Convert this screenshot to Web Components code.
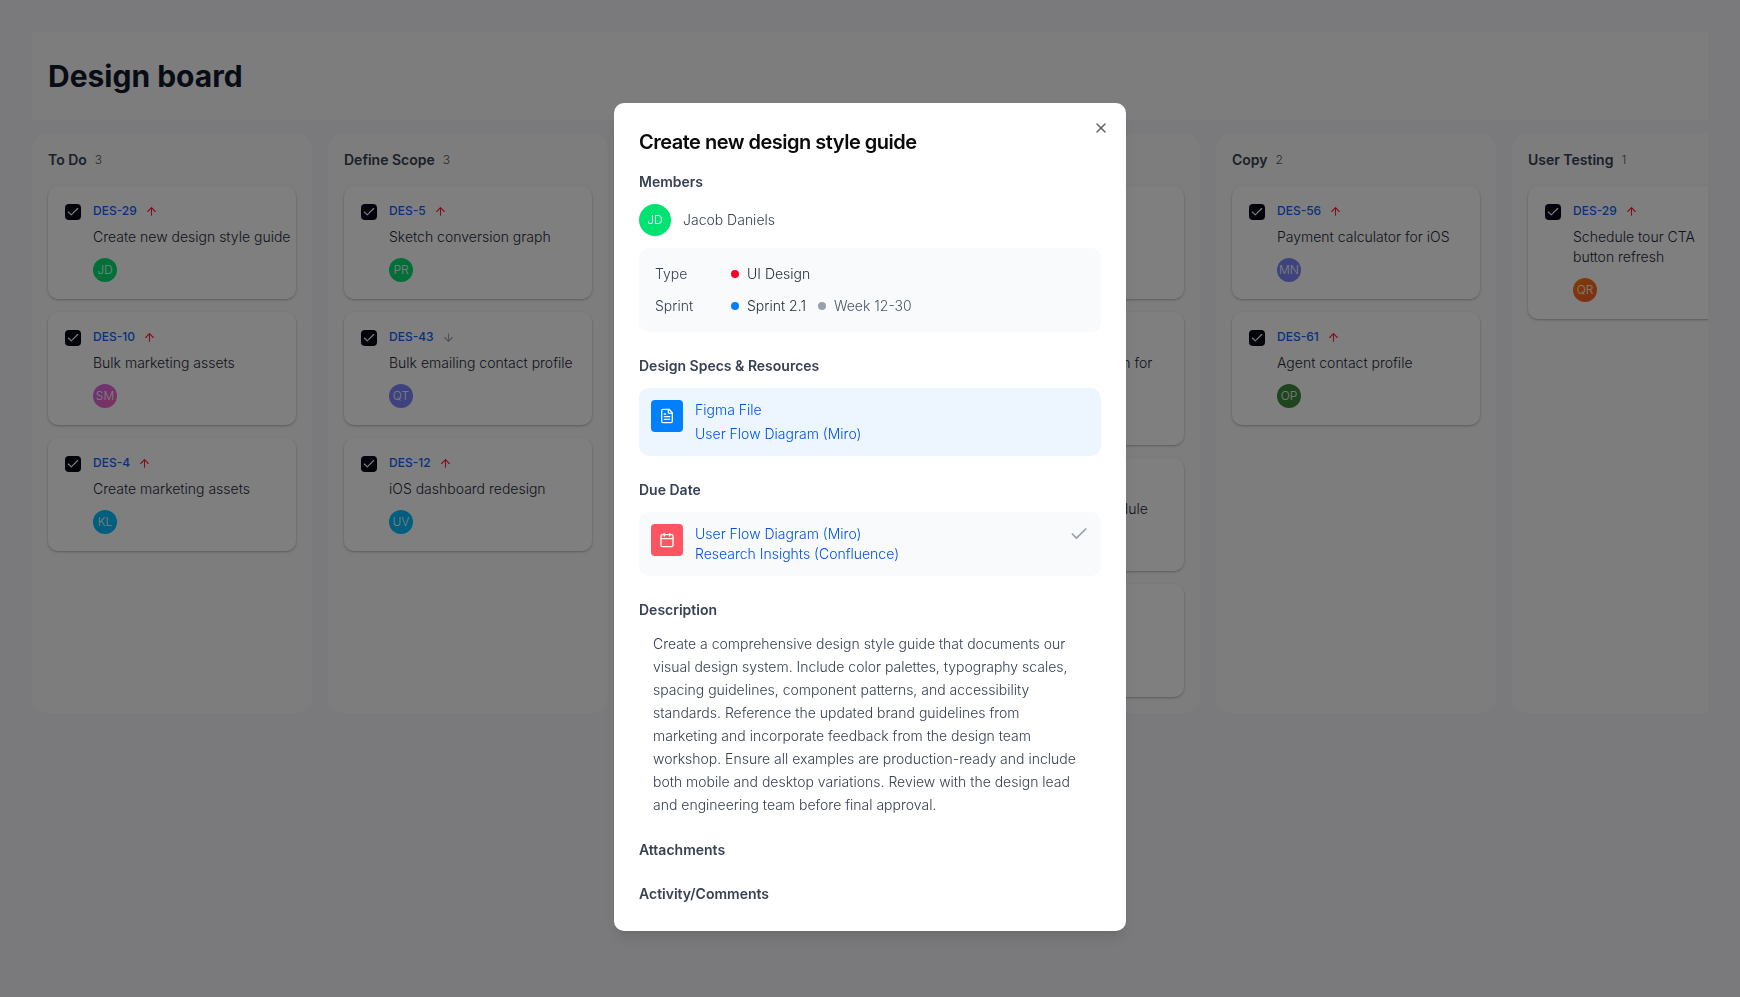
<!DOCTYPE html>
<html lang="en">
<head>
<meta charset="utf-8">
<title>Design board</title>
<style>
  body {
    margin: 0;
    min-height: 100vh;
    background: #f5f5f8;
    color: #1e2939;
    font-family: Inter, "Liberation Sans", sans-serif;
    font-size: 14px;
    font-weight: 300;
    line-height: 20px;
    font-variation-settings: "opsz" 14;
  }
</style>
</head>
<body>
<board-page heading="Design board">
  <board-column heading="To Do" count="3">
    <task-card key="DES-29" initials="JD" color="#05df72">Create new design style guide</task-card>
    <task-card key="DES-10" initials="SM" color="linear-gradient(135deg, #d868f0, #fb64b6)">Bulk marketing assets</task-card>
    <task-card key="DES-4" initials="KL" color="#00bcff">Create marketing assets</task-card>
  </board-column>
  <board-column heading="Define Scope" count="3">
    <task-card key="DES-5" initials="PR" color="#05df72">Sketch conversion graph</task-card>
    <task-card key="DES-43" initials="QT" color="#7c86ff" priority="low">Bulk emailing contact profile</task-card>
    <task-card key="DES-12" initials="UV" color="#00bcff">iOS dashboard redesign</task-card>
  </board-column>
  <board-column heading="Design" count="0"></board-column>
  <board-column heading="Review" count="4">
    <task-card key="DES-40" initials="EF" color="#00bcff">Search filters</task-card>
    <task-card key="DES-41" initials="GH" color="#05df72">Landing page redesign for<br>agents</task-card>
    <task-card key="DES-44" initials="IJ" color="#7c86ff">Book home tour schedule</task-card>
    <task-card key="DES-47" initials="WX" color="#00bcff">Saved homes</task-card>
  </board-column>
  <board-column heading="Copy" count="2">
    <task-card key="DES-56" initials="MN" color="#7c86ff">Payment calculator for iOS</task-card>
    <task-card key="DES-61" initials="OP" color="#3f8a3f">Agent contact profile</task-card>
  </board-column>
  <board-column heading="User Testing" count="1">
    <task-card key="DES-29" initials="QR" color="linear-gradient(135deg, #ff7a00, #ff5a36)">Schedule tour CTA<br>button refresh</task-card>
  </board-column>
</board-page>

<task-dialog heading="Create new design style guide">
  <dialog-section heading="Members">
    <member-row initials="JD">Jacob Daniels</member-row>
    <task-facts></task-facts>
  </dialog-section>
  <dialog-section heading="Design Specs &amp; Resources">
    <link-panel icon="file" tone="blue">
      <a href="#figma">Figma File</a>
      <a href="#flow">User Flow Diagram (Miro)</a>
    </link-panel>
  </dialog-section>
  <dialog-section heading="Due Date">
    <link-panel icon="calendar" tone="red" done>
      <a href="#due-flow">User Flow Diagram (Miro)</a>
      <a href="#insights">Research Insights (Confluence)</a>
    </link-panel>
  </dialog-section>
  <dialog-section heading="Description">
    <task-description>Create a comprehensive design style guide that documents our visual design system. Include color palettes, typography scales, spacing guidelines, component patterns, and accessibility standards. Reference the updated brand guidelines from marketing and incorporate feedback from the design team workshop. Ensure all examples are production-ready and include both mobile and desktop variations. Review with the design lead and engineering team before final approval.</task-description>
  </dialog-section>
  <dialog-section heading="Attachments"></dialog-section>
  <dialog-section heading="Activity/Comments"></dialog-section>
</task-dialog>

<script>
const ICONS = {
  up: '<path d="m5 12 7-7 7 7"/><path d="M12 19V5"/>',
  down: '<path d="M12 5v14"/><path d="m19 12-7 7-7-7"/>',
  check: '<path d="M20 6 9 17l-5-5"/>',
  close: '<path d="M18 6 6 18"/><path d="m6 6 12 12"/>',
  file: '<path d="M15 2H6a2 2 0 0 0-2 2v16a2 2 0 0 0 2 2h12a2 2 0 0 0 2-2V7Z"/><path d="M14 2v4a2 2 0 0 0 2 2h4"/><path d="M10 9H8"/><path d="M16 13H8"/><path d="M16 17H8"/>',
  calendar: '<path d="M8 2v4"/><path d="M16 2v4"/><rect width="18" height="18" x="3" y="4" rx="2"/><path d="M3 10h18"/>'
};

function icon(name, size, width = 2) {
  return `<svg width="${size}" height="${size}" viewBox="0 0 24 24" fill="none" stroke="currentColor" stroke-width="${width}" stroke-linecap="round" stroke-linejoin="round" aria-hidden="true">${ICONS[name]}</svg>`;
}

class BoardPage extends HTMLElement {
  connectedCallback() {
    this.attachShadow({ mode: 'open' });
    this.shadowRoot.innerHTML = `
      <style>
        :host {
          display: block;
          padding: 32px;
        }
        header {
          padding: 24px 16px;
          background: #fafafc;
        }
        h1 {
          margin: 0;
          font-size: 30px;
          line-height: 40px;
          font-weight: 700;
          color: #101828;
        }
        .columns {
          display: flex;
          gap: 16px;
          margin-top: 14px;
          overflow: hidden;
        }
      </style>
      <header><h1>${this.getAttribute('heading')}</h1></header>
      <div class="columns"><slot></slot></div>
    `;
  }
}
customElements.define('board-page', BoardPage);

class BoardColumn extends HTMLElement {
  connectedCallback() {
    this.attachShadow({ mode: 'open' });
    this.shadowRoot.innerHTML = `
      <style>
        :host {
          display: block;
          flex: 0 0 280px;
          box-sizing: border-box;
          padding: 16px;
          border-radius: 16px;
          background: #fafafc;
        }
        .head {
          display: flex;
          align-items: center;
          gap: 8px;
          margin-bottom: 16px;
        }
        h2 {
          margin: 0;
          font-size: 14px;
          font-weight: 600;
          color: #364153;
        }
        .count {
          font-size: 12px;
          color: #4a5565;
        }
        .cards {
          display: flex;
          flex-direction: column;
          gap: 13px;
        }
      </style>
      <div class="head">
        <h2>${this.getAttribute('heading')}</h2>
        <span class="count">${this.getAttribute('count')}</span>
      </div>
      <div class="cards"><slot></slot></div>
    `;
  }
}
customElements.define('board-column', BoardColumn);

class TaskCard extends HTMLElement {
  connectedCallback() {
    const key = this.getAttribute('key');
    const low = this.getAttribute('priority') === 'low';
    this.attachShadow({ mode: 'open' });
    this.shadowRoot.innerHTML = `
      <style>
        :host {
          display: grid;
          grid-template-columns: 16px 1fr;
          column-gap: 12px;
          padding: 17px;
          border-radius: 10px;
          background: #fff;
          box-shadow: 0 1px 3px rgba(0, 0, 0, 0.14), 0 1px 2px rgba(0, 0, 0, 0.14);
        }
        .tick {
          position: relative;
          width: 16px;
          height: 16px;
          margin-top: 1px;
          color: #fff;
        }
        input {
          appearance: none;
          display: block;
          width: 16px;
          height: 16px;
          margin: 0;
          border-radius: 4px;
          background: #030213;
        }
        .tick svg {
          position: absolute;
          inset: 1px;
          pointer-events: none;
        }
        .top {
          display: flex;
          align-items: center;
          gap: 8px;
          height: 16px;
        }
        a {
          font-size: 12px;
          line-height: 16px;
          font-weight: 500;
          color: #0f62f5;
          text-decoration: none;
        }
        .up { color: #fb1c36; }
        .down { color: #99a1af; }
        .top svg { display: block; }
        p {
          margin: 8px -16px 0 0;
        }
        .avatar {
          display: flex;
          align-items: center;
          justify-content: center;
          width: 24px;
          height: 24px;
          margin-top: 11px;
          border-radius: 50%;
          font-size: 12px;
          color: #fff;
        }
      </style>
      <div class="tick">
        <input type="checkbox" checked aria-label="Select ${key}">
        ${icon('check', 14)}
      </div>
      <div>
        <div class="top">
          <a href="#${key}">${key}</a>
          <span class="${low ? 'down' : 'up'}">${icon(low ? 'down' : 'up', 13)}</span>
        </div>
        <p><slot></slot></p>
        <div class="avatar" style="background: ${this.getAttribute('color')}">${this.getAttribute('initials')}</div>
      </div>
    `;
  }
}
customElements.define('task-card', TaskCard);

class TaskDialog extends HTMLElement {
  connectedCallback() {
    this.attachShadow({ mode: 'open' });
    this.shadowRoot.innerHTML = `
      <style>
        :host {
          position: fixed;
          inset: 0;
          display: flex;
          align-items: flex-start;
          justify-content: center;
          padding-top: 103px;
          background: rgba(0, 0, 0, 0.5);
        }
        section {
          position: relative;
          box-sizing: border-box;
          width: 100%;
          max-width: 512px;
          padding: 25px 25px 27px;
          border-radius: 10px;
          background: #fff;
          box-shadow: 0 10px 15px -3px rgba(0, 0, 0, 0.1), 0 4px 6px -4px rgba(0, 0, 0, 0.1);
        }
        h2 {
          margin: 0 0 16px;
          font-size: 20px;
          line-height: 28px;
          font-weight: 600;
          letter-spacing: -0.025em;
          color: #0a0a0a;
        }
        button {
          position: absolute;
          top: 17px;
          right: 17px;
          padding: 0;
          border: 0;
          background: none;
          color: #5c5c5c;
        }
        button svg { display: block; }
        .body {
          display: flex;
          flex-direction: column;
          gap: 24px;
        }
      </style>
      <section role="dialog" aria-labelledby="title">
        <button type="button" aria-label="Close">${icon('close', 16)}</button>
        <h2 id="title">${this.getAttribute('heading')}</h2>
        <div class="body"><slot></slot></div>
      </section>
    `;
  }
}
customElements.define('task-dialog', TaskDialog);

class DialogSection extends HTMLElement {
  connectedCallback() {
    this.attachShadow({ mode: 'open' });
    this.shadowRoot.innerHTML = `
      <style>
        :host {
          display: flex;
          flex-direction: column;
          gap: 12px;
        }
        h3 {
          align-self: flex-start;
          margin: 0;
          font-size: 14px;
          font-weight: 600;
          color: #364153;
        }
      </style>
      <h3>${this.getAttribute('heading')}</h3>
      <slot></slot>
    `;
  }
}
customElements.define('dialog-section', DialogSection);

class MemberRow extends HTMLElement {
  connectedCallback() {
    this.attachShadow({ mode: 'open' });
    this.shadowRoot.innerHTML = `
      <style>
        :host {
          display: flex;
          align-items: center;
          gap: 12px;
          color: #364153;
        }
        .avatar {
          display: flex;
          align-items: center;
          justify-content: center;
          width: 32px;
          height: 32px;
          border-radius: 50%;
          background: #00e272;
          font-size: 12px;
          color: #fff;
        }
      </style>
      <span class="avatar">${this.getAttribute('initials')}</span>
      <span><slot></slot></span>
    `;
  }
}
customElements.define('member-row', MemberRow);

class TaskFacts extends HTMLElement {
  connectedCallback() {
    this.attachShadow({ mode: 'open' });
    this.shadowRoot.innerHTML = `
      <style>
        :host {
          display: block;
          padding: 16px;
          border-radius: 10px;
          background: #f9fafb;
        }
        dl {
          display: grid;
          grid-template-columns: 64px 1fr;
          gap: 12px;
          margin: 0;
        }
        dt { color: #364153; }
        dd {
          display: flex;
          gap: 12px;
          margin: 0;
          color: #1e2939;
        }
        dd span {
          display: flex;
          align-items: center;
          gap: 8px;
        }
        dd span::before {
          content: "";
          width: 8px;
          height: 8px;
          border-radius: 50%;
          background: var(--dot);
        }
        .muted { color: #4a5565; }
      </style>
      <dl>
        <dt>Type</dt>
        <dd><span style="--dot: #fb0028">UI Design</span></dd>
        <dt>Sprint</dt>
        <dd>
          <span style="--dot: #0080ff">Sprint 2.1</span>
          <span class="muted" style="--dot: #99a1af">Week 12-30</span>
        </dd>
      </dl>
    `;
  }
}
customElements.define('task-facts', TaskFacts);

class LinkPanel extends HTMLElement {
  connectedCallback() {
    this.attachShadow({ mode: 'open' });
    this.shadowRoot.innerHTML = `
      <style>
        :host {
          display: flex;
          align-items: flex-start;
          gap: 12px;
          padding: 12px;
          border-radius: 10px;
          background: #f9fafb;
        }
        :host([tone="blue"]) { background: #edf5ff; }
        .icon {
          display: flex;
          align-items: center;
          justify-content: center;
          width: 32px;
          height: 32px;
          border-radius: 4px;
          background: #ff5462;
          color: #fff;
        }
        :host([tone="blue"]) .icon { background: #0080ff; }
        .links {
          display: flex;
          flex: 1;
          flex-direction: column;
          align-items: flex-start;
        }
        :host([tone="blue"]) .links { gap: 4px; }
        ::slotted(a) {
          color: #0052ee;
          text-decoration: none;
        }
        .done {
          color: #99a1af;
        }
        .done svg { display: block; }
      </style>
      <span class="icon">${icon(this.getAttribute('icon'), 16)}</span>
      <div class="links"><slot></slot></div>
      ${this.hasAttribute('done') ? `<span class="done">${icon('check', 20)}</span>` : ''}
    `;
  }
}
customElements.define('link-panel', LinkPanel);

class TaskDescription extends HTMLElement {
  connectedCallback() {
    this.attachShadow({ mode: 'open' });
    this.shadowRoot.innerHTML = `
      <style>
        :host {
          display: block;
          padding: 0 14px;
          line-height: 23px;
          color: #364153;
        }
      </style>
      <slot></slot>
    `;
  }
}
customElements.define('task-description', TaskDescription);
</script>
</body>
</html>
